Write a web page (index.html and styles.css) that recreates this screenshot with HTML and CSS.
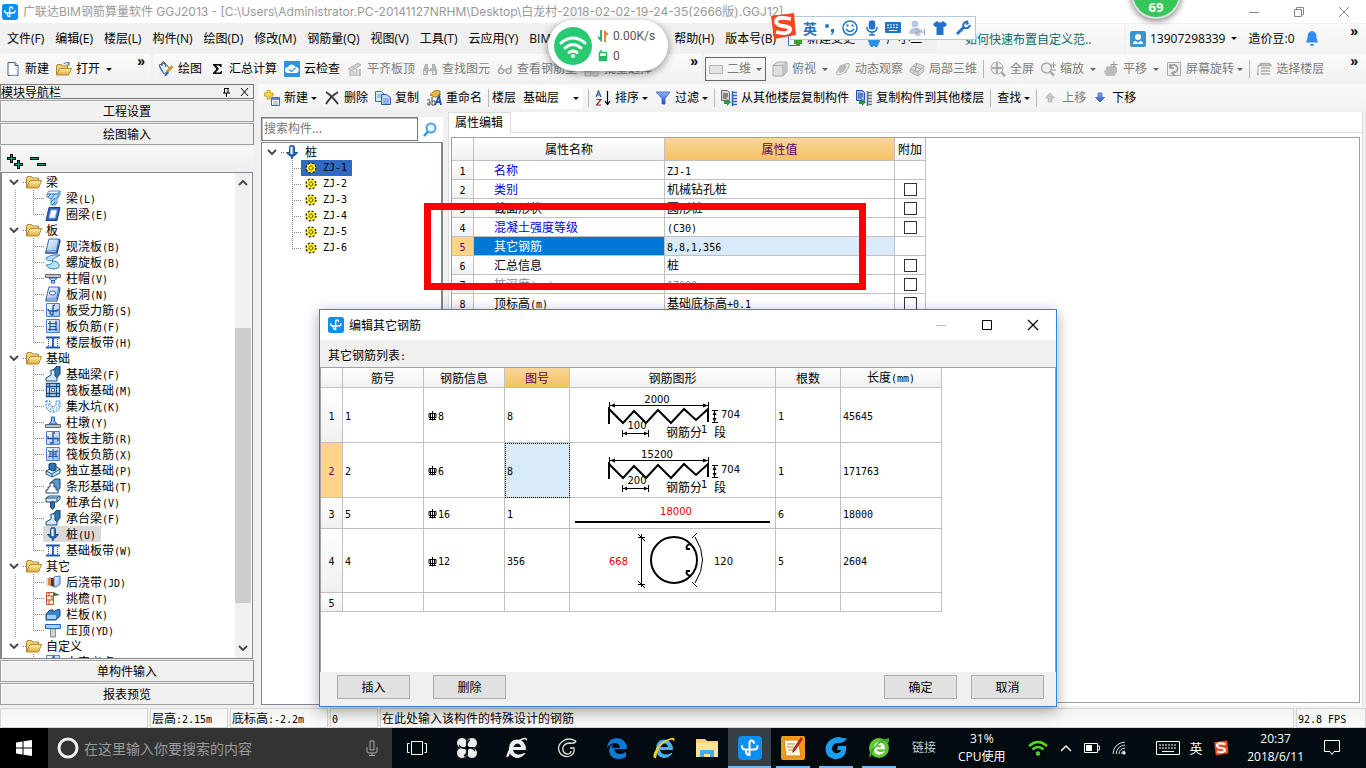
FILE: index.html
```html
<!DOCTYPE html>
<html lang="zh-CN">
<head>
<meta charset="utf-8">
<title>广联达BIM钢筋算量软件 GGJ2013</title>
<link rel="stylesheet" href="styles.css">
</head>
<body>
<svg class="sprite" aria-hidden="true">
  <defs>
    <linearGradient id="gold" x1="0" y1="0" x2="0" y2="1"><stop offset="0" stop-color="#fff0b0"/><stop offset="1" stop-color="#e3a935"/></linearGradient>
    <linearGradient id="sky" x1="0" y1="0" x2="1" y2="1"><stop offset="0" stop-color="#ffffff"/><stop offset="1" stop-color="#8fb6ee"/></linearGradient>
    <linearGradient id="arrowBlue" x1="0" y1="0" x2="0" y2="1"><stop offset="0" stop-color="#8fb4ff"/><stop offset="1" stop-color="#1a4fd0"/></linearGradient>
  </defs>
  <symbol id="app" viewBox="0 0 24 24"><rect width="24" height="24" rx="4" fill="#0b8ff0"/><path d="M16 7q-.5-2.500-2.500-2.500T11.500 7v12Q8 19 8 15M4 10q0 3.500 3.500 3.500h8.500q3.500 0 3.500-3.500" fill="none" stroke="#fff" stroke-width="2" stroke-linecap="round"/></symbol>
  <symbol id="page" viewBox="0 0 16 16"><path d="M3 1.500h7l3 3v10H3z" fill="#fff" stroke="#44607f"/><path d="M10 1.500v3h3" fill="#cfe0f4" stroke="#44607f"/><path d="M12 6v8H5" fill="none" stroke="#bcd2ec"/></symbol>
  <symbol id="folder" viewBox="0 0 16 16"><path d="M.5 14V4l1-1.500h4l1 1.500h6v3" fill="#f3cf70" stroke="#b08a3a"/><path d="M.5 14L4 6.500h11.500L12.500 14z" fill="url(#gold)" stroke="#b08a3a"/></symbol>
  <symbol id="open" viewBox="0 0 16 16"><path d="M.5 14V5l1-1.500h4l1 1.500h5v3" fill="#f3cf70" stroke="#b08a3a"/><path d="M.5 14L4 7.500h11.500L12.500 14z" fill="url(#gold)" stroke="#b08a3a"/><path d="M8 3q3-3 5 0V1m0 3h-2.500" fill="none" stroke="#4a78a8" stroke-width="1.200"/></symbol>
  <symbol id="draw" viewBox="0 0 16 16"><path d="M1 4l6-2 5 6-6 5z" fill="#e9f1fb" stroke="#3c5f9c"/><path d="M1.500 4.500L6 12l-2-1-3-5z" fill="#4b74c4"/><path d="M4 5q-1-5 2-4l2 5" fill="none" stroke="#444"/><path d="M14.500 5L9 11" stroke="#c9a12a" stroke-width="3"/><path d="M9 10l2 2-3 3H6z" fill="#2c6ad0"/></symbol>
  <symbol id="sigma" viewBox="0 0 16 16"><path d="M4 3h8.500v3h-1q-.3-1.500-2-1.500H7L10 8l-3.500 3.500H10q1.500 0 2-1.500h1l-.5 3H4v-1L7.500 8 4 4z" fill="#000"/></symbol>
  <symbol id="cloud" viewBox="0 0 16 16"><rect width="16" height="16" rx="1" fill="#2996e3"/><path d="M4 12a3 3 0 010-6 4 4 0 017.500 0A3 3 0 0112 12z" fill="#fff"/><path d="M5 8.500l2.500 2L11.500 7" fill="none" stroke="#2996e3" stroke-width="1.300"/></symbol>
  <symbol id="align" viewBox="0 0 16 16"><path d="M1 8l10-6 3 2-9 6z" fill="#ccc" stroke="#b5b5b5"/><path d="M2 10v5h12V8H9v2z" fill="#c4c4c4"/><path d="M5 10v4M8 9v5M11 8v6" stroke="#f0f0f0"/></symbol>
  <symbol id="binoc" viewBox="0 0 16 16"><path d="M3 3h3v4h4V3h3l2 6v5h-5v-4H6v4H1V9z" fill="#b5b5b5"/><path d="M3 10v3m9-3v3M7.500 6v3" stroke="#eee" stroke-width="1.500"/></symbol>
  <symbol id="glasses" viewBox="0 0 16 16"><g fill="none" stroke="#aaa" stroke-width="1.500"><circle cx="4" cy="10" r="2.500"/><circle cx="11.500" cy="10" r="2.500"/><path d="M6.500 9h2.500M2 9l3-5M14 9V4"/></g></symbol>
  <symbol id="batch" viewBox="0 0 16 16"><path d="M1 10h6v5H1zM9 11l5-4v8H9z" fill="#ddd" stroke="#aaa"/></symbol>
  <symbol id="rect2d" viewBox="0 0 16 16"><path d="M1.500 4.500h13v8h-13z" fill="#e3e3e3" stroke="#b5b5b5"/></symbol>
  <symbol id="cube" viewBox="0 0 16 16"><path d="M1 4.500L5 1h10v10l-4 4H1z" fill="#e0e0e0" stroke="#aaa"/><path d="M1 4.500h10V15M11 4.500L15 1" fill="none" stroke="#aaa"/><path d="M11.500 5L15 1.500V11l-3.500 3.500z" fill="#c4c4c4"/></symbol>
  <symbol id="orbit" viewBox="0 0 16 16"><ellipse cx="8" cy="8" rx="8" ry="3" fill="#ddd" stroke="#bbb" transform="rotate(-40 8 8)"/><circle cx="8" cy="8" r="4.500" fill="#b8b8b8"/><path d="M3 13Q10 13 13 4" stroke="#fff" fill="none"/></symbol>
  <symbol id="local3d" viewBox="0 0 16 16"><path d="M1 8l6-6 8 3-1 6-5 4-8-4z" fill="#d8d8d8" stroke="#b0b0b0"/><path d="M1 8l8 3 6-6M9 11v4M4 5l8 3M5 9.500V13M8 2L6 10" fill="none" stroke="#aaa"/></symbol>
  <symbol id="full" viewBox="0 0 16 16"><circle cx="7" cy="7" r="6" fill="#eee" stroke="#aaa"/><path d="M7 2v10M2 7h10" stroke="#999" stroke-width="1.500"/><path d="M11 11l4 4" stroke="#aaa" stroke-width="2.500"/></symbol>
  <symbol id="zoomg" viewBox="0 0 16 16"><circle cx="6.500" cy="7" r="5" fill="#eee" stroke="#aaa" stroke-width="1.500"/><path d="M10 10.500l4 4" stroke="#aaa" stroke-width="2.500"/><path d="M11 4h5M13.500 1.500v5M12 9h4" stroke="#999"/></symbol>
  <symbol id="hand" viewBox="0 0 16 16"><path d="M3 15l-2-5 2-1V6l2-1 1 1 2-2 2 1 2-1 2 3v4l-3 4z" fill="#bbb"/><path d="M11 0v7M7.500 3.500h7" stroke="#999"/></symbol>
  <symbol id="rot" viewBox="0 0 16 16"><path d="M1.500 1.500h13v13h-13z" fill="#eee" stroke="#aaa"/><path d="M4 7q1-4 5-3 4 2 2 6-1 2-4 2M4 3v4h4M9 10l-3 2 3 3" fill="none" stroke="#999" stroke-width="1.500"/></symbol>
  <symbol id="floors" viewBox="0 0 16 16"><path d="M5 2.500h8l2 2H3zM5 7h9M5 10h9M5 13h9" fill="#ddd" stroke="#aaa" stroke-width="1.500"/><path d="M2 5v9m-1-2l1 2 1-2" stroke="#aaa" fill="none"/></symbol>
  <symbol id="addnew" viewBox="0 0 16 16"><path d="M3 0h3v3h3v3H6v3H3V6H0V3h3z" fill="#ffe13b" stroke="#b98d0b" stroke-width=".8"/><path d="M7.500 7.500h8v8h-8z" fill="#fff" stroke="#3a66b5"/><path d="M8 8h7v2H8z" fill="#5b8de0"/><path d="M9 12h5M9 14h5" stroke="#6c98d8"/></symbol>
  <symbol id="del" viewBox="0 0 16 16"><path d="M2 2q6 4 12 12M14 2Q6 7 2 14" fill="none" stroke="#333" stroke-width="1.800"/></symbol>
  <symbol id="copy" viewBox="0 0 16 16"><path d="M.5 1.500h6l3 3v7h-9z" fill="#dce9fb" stroke="#416cb5"/><path d="M2 5h5M2 7h5" stroke="#6c98d8"/><path d="M6.500 4.500h5l4 3v7h-9z" fill="#c3d9f9" stroke="#2c58a8"/><path d="M8 9h6M8 11h6M8 13h6" stroke="#5b8de0"/></symbol>
  <symbol id="rename" viewBox="0 0 16 16"><path d="M4 5q4-6 10-4v6H8z" fill="#e8b83a" stroke="#8c6a1b" stroke-width=".8"/><path d="M1 10q3-1 3 1v4H2q-2-2 2-2.500M6 7v8h3v-4H6" fill="none" stroke="#555"/><path d="M9 15l4-9 2 9m-4-3h4" fill="none" stroke="#2450b8" stroke-width="1.800"/></symbol>
  <symbol id="sort" viewBox="0 0 16 16"><path d="M1 7l2.500-6L6 7M2 5h3" fill="none" stroke="#2b4fa8" stroke-width="1.200"/><path d="M1.500 9.500H6L1.500 15H6" fill="none" stroke="#9c2828" stroke-width="1.200"/><path d="M12.500 1v13M10 11l2.500 3.500L15 11" fill="none" stroke="#000" stroke-width="1.200"/></symbol>
  <symbol id="funnel" viewBox="0 0 16 16"><path d="M1 2h14L10 8.500V14H7V8.500z" fill="url(#arrowBlue)" stroke="#2a5bbd" stroke-width=".8"/></symbol>
  <symbol id="fromf" viewBox="0 0 16 16"><path d="M.5.500h6l2 2v8h-8z" fill="#d7d7d7" stroke="#666"/><path d="M2 4h5M2 6h5M2 8h4" stroke="#333"/><path d="M3 11h3v-2l4 3-4 4v-2H3z" fill="#2a9a3c"/><path d="M11 2.500h5M11 5.500h5M11 8.500h5M11 11.500h5M11 14.500h5M11.500 1v15" stroke="#2f68c8" stroke-width="1.600"/></symbol>
  <symbol id="tof" viewBox="0 0 16 16"><path d="M.5.500h6l2 2v8h-8z" fill="#9dbcf5" stroke="#2450b8"/><path d="M2 4h5M2 6h5M2 8h4" stroke="#1d46a8"/><path d="M3 11h3v-2l4 3-4 4v-2H3z" fill="#2a9a3c"/><path d="M11 2.500h5M11 5.500h5M11 8.500h5M11 11.500h5M11 14.500h5M11.500 1v15" stroke="#64748c" stroke-width="1.600"/></symbol>
  <symbol id="up" viewBox="0 0 10 16"><path d="M5 3l4.500 5H7v4H3V8H.5z" fill="#c9c9c9" stroke="#aaa" stroke-width=".6"/></symbol>
  <symbol id="down" viewBox="0 0 10 16"><path d="M5 12L9.500 7.500H7V3H3v4.500H.5z" fill="url(#arrowBlue)" stroke="#1b3f9a" stroke-width=".6"/></symbol>
  <symbol id="user" viewBox="0 0 16 16"><rect width="16" height="16" rx="2" fill="#3c96cb"/><circle cx="8" cy="6" r="3" fill="#fff"/><path d="M3 13q0-3 3-3l2 2 2-2q3 0 3 3z" fill="#fff"/></symbol>
  <symbol id="bell" viewBox="0 0 14 16"><path d="M7 0q5 1 4.500 7l1.500 4.500H1L2.500 7Q2 1 7 0z" fill="#2f8df5"/><path d="M4.500 13h5L7 15.500z" fill="#2f8df5"/></symbol>
  <symbol id="newchg" viewBox="0 0 16 16"><path d="M1.500 2.500h10v12h-10z" fill="#fff" stroke="#3b76b8"/><path d="M11 7v8M7 11h8" stroke="#3a9f2a" stroke-width="4"/></symbol>
  <symbol id="gxe" viewBox="0 0 16 16"><circle cx="8" cy="9" r="6" fill="#2b93e6"/><path d="M3 13l2 3h2l1-2 1 2h2l2-3z" fill="#2b93e6"/></symbol>
  <symbol id="chev" viewBox="0 0 10 10"><path d="M1 3l4 4 4-4" fill="none" stroke="#444" stroke-width="1.800"/></symbol>
  <symbol id="gear" viewBox="0 0 12 12"><circle cx="6" cy="6" r="4.800" fill="#ffee20" stroke="#222" stroke-width="1.600" stroke-dasharray="2 1.770"/><circle cx="6" cy="6" r="4.200" fill="#ffee20"/><circle cx="6" cy="6" r="2" fill="none" stroke="#222" stroke-dasharray="1.500 .6"/></symbol>
  <symbol id="mag" viewBox="0 0 16 16"><circle cx="9" cy="6" r="4.500" fill="#e9f5ff" stroke="#48a4e8" stroke-width="2"/><path d="M6 9.500L2 14" stroke="#3a90d8" stroke-width="2.500"/></symbol>
  <symbol id="t-beam" viewBox="0 0 16 16"><path d="M2 4l2-3h11l-2 3z" fill="#fff" stroke="#3c8fd8"/><path d="M2 4h11v3l-3 2v6H6V9L2 7zM13 4l2-3v4l-3 4v4l-2 2" fill="#b9dcf6" stroke="#3c8fd8"/><path d="M3 7l3-3m0 5l4-5m-4 8l4-4m-3 7l3-3" stroke="#2272be"/></symbol>
  <symbol id="t-ring" viewBox="0 0 16 16"><path d="M4 1.500h11l-3 13H1z" fill="#2e62b8" stroke="#173f8c"/><path d="M6 4h6l-2 8H4z" fill="#fff" stroke="#8fb6ee"/></symbol>
  <symbol id="t-slab" viewBox="0 0 16 16"><path d="M4 1h10l-2.500 12H1z" fill="url(#sky)" stroke="#3a6cc0"/><path d="M1 13v2h11l3-12-1-2M12 13v2" fill="none" stroke="#173f8c" stroke-width="1.300"/></symbol>
  <symbol id="t-spiral" viewBox="0 0 16 16"><path d="M15 1Q6 0 1 4q0 3 7 3-1 4-7 4 4 6 12 3 3-3-1-6-4-1-5-2 3-3 8-5z" fill="#b5e0f8" stroke="#2f86c8"/></symbol>
  <symbol id="t-cap" viewBox="0 0 16 16"><path d="M.5 4.500h15v3H.5z" fill="#c3c3c3" stroke="#666"/><path d="M4 8h8l-2 2.500H6zM6.500 10.500h3V13h-3z" fill="#cfe6fb" stroke="#1d57b4"/></symbol>
  <symbol id="t-hole" viewBox="0 0 16 16"><path d="M4 1h10l-2.500 12H1z" fill="url(#sky)" stroke="#3a6cc0"/><path d="M1 13v2h11l3-12-1-2" fill="none" stroke="#173f8c"/><ellipse cx="7.500" cy="7" rx="3" ry="2" fill="#fff" stroke="#2a5bbd"/></symbol>
  <symbol id="t-force" viewBox="0 0 16 16"><path d="M1.500 1.500h13v13h-13z" fill="url(#sky)" stroke="#4a7fd4"/><path d="M8 13V5q0-2 2-2M3 7q0 2 2 2h6q2 0 2-2M8 13q-3 0-3-3" fill="none" stroke="#1d4fa0" stroke-width="1.300"/></symbol>
  <symbol id="t-neg" viewBox="0 0 16 16"><path d="M1.500 1.500h13v13h-13z" fill="url(#sky)" stroke="#4a7fd4"/><path d="M3 5.500h9M3 11.500h9M5 3v10M11 3v10M5 8.500h6" fill="none" stroke="#1d4fa0" stroke-width="1.200"/></symbol>
  <symbol id="t-strip" viewBox="0 0 16 16"><path d="M1 3.500h14M1 13.500h14M8 4v9" fill="none" stroke="#1d57b4" stroke-width="1.800"/><path d="M3.500 5v8M12.500 5v8" stroke="#1d57b4" stroke-dasharray="1 1"/></symbol>
  <symbol id="t-fbeam" viewBox="0 0 16 16"><path d="M8 4l4-4h3v8l-4 5z" fill="#2f72ae" stroke="#123f72"/><path d="M1 15v-3l5-3V4h4v6l2 2v3z" fill="#d3e9fa" stroke="#174b86"/></symbol>
  <symbol id="t-raft" viewBox="0 0 16 16"><path d="M1.500 1.500h13v13h-13z" fill="#d3e9fa" stroke="#174b86" stroke-width="1.300"/><path d="M4.500 1v14M11.500 1v14M1 4.500h14M1 11.500h14" fill="none" stroke="#174b86" stroke-width="1.300"/><path d="M6.500 6.500h3v3h-3z" fill="#fff" stroke="#2f72ae"/></symbol>
  <symbol id="t-sump" viewBox="0 0 16 16"><path d="M1 3h4v4q3 3 6 0V3h4v5q-1 6-7 6T1 8z" fill="#e4f2fd" stroke="#2f74c4" stroke-dasharray="2 1"/><path d="M5 11h1m2 1h1m2-2h1M3 7h1m9 0h1M7 10h1" stroke="#2f74c4"/></symbol>
  <symbol id="t-pier" viewBox="0 0 16 16"><path d="M.5 10.500h15v3H.5z" fill="#c3c3c3" stroke="#666"/><path d="M4 10l2.500-3V3h3v4l2.500 3z" fill="#9cc6f2" stroke="#1d57b4"/></symbol>
  <symbol id="t-main" viewBox="0 0 16 16"><path d="M1.500 1.500h13v13h-13z" fill="url(#sky)" stroke="#4a7fd4"/><path d="M10 3H8v10H5M3 6v2.500h10V11" fill="none" stroke="#1d4fa0" stroke-width="1.300"/></symbol>
  <symbol id="t-rneg" viewBox="0 0 16 16"><path d="M1.500 1.500h13v13h-13z" fill="url(#sky)" stroke="#4a7fd4"/><path d="M3 5q5 2 10 0M3 11q5-2 10 0M8 3v10M5 8h6M5 5v6M11 5v6" fill="none" stroke="#1d4fa0"/></symbol>
  <symbol id="t-indep" viewBox="0 0 16 16"><path d="M1 9l9-5 5 3v4l-8 4-6-3z" fill="#d3e9fa" stroke="#174b86"/><path d="M1 9l6 3 8-5M7 12v3" fill="none" stroke="#174b86"/><path d="M4 2l4-1 3 1v6L8 9 4 7z" fill="#2f72ae" stroke="#123f72"/></symbol>
  <symbol id="t-tape" viewBox="0 0 16 16"><path d="M5 5l5-4h5v9l-4 5z" fill="#5f97c8" stroke="#123f72"/><path d="M1 15v-3h2V9h2V5h4v4h2v3h2v3z" fill="#fff" stroke="#174b86"/></symbol>
  <symbol id="t-pilecap" viewBox="0 0 16 16"><path d="M1 4l3-2h11v3l-3 3H1z" fill="#d3e9fa" stroke="#174b86"/><path d="M1 4h11v4M12 4l3-2" fill="none" stroke="#174b86"/><path d="M5.500 8h4v5l-2 2.500-2-2.500z" fill="#2f72ae" stroke="#123f72"/></symbol>
  <symbol id="t-pile" viewBox="0 0 16 16"><path d="M2.500 8.500h11l-2.500 3H9.500L8 15l-1.500-3.500H5z" fill="#3b7dc0" stroke="#17508c"/><rect x="5.500" y="1.500" width="5" height="10" rx="2" fill="#3b7dc0" stroke="#17508c"/><path d="M7.500 3v7" stroke="#fff" stroke-width="2"/></symbol>
  <symbol id="t-post" viewBox="0 0 16 16"><path d="M1 4h5v8H1z" fill="#f4dcc4"/><path d="M4 4h5v9l-5-2z" fill="#5f2f12"/><path d="M3 4l3-1v9l-3-1z" fill="#e08a50"/><path d="M9 3l6-1v8l-4 3H9z" fill="url(#sky)" stroke="#4772b8"/></symbol>
  <symbol id="t-eave" viewBox="0 0 16 16"><path d="M1.500 2.500h7v12h-7z" fill="#fff0e4" stroke="#b8552a"/><path d="M1 6h8M1 10h8M4 2v4m3 0v4m-3 0v4" stroke="#b8552a"/><path d="M8 2l7 3-6 1z" fill="#555"/></symbol>
  <symbol id="t-rail" viewBox="0 0 16 16"><path d="M1 8l4-4h3v2l6-3 1 1v6l-4 4H1z" fill="#3d86c8" stroke="#174b86"/><path d="M2 9h9v4H2z" fill="#9fd0f2"/></symbol>
  <symbol id="t-top" viewBox="0 0 16 16"><path d="M.5 2.500h15v4H.5z" fill="#a8d0fa" stroke="#1d62c0"/><path d="M5.500 7h5v8h-5z" fill="#d4d4d4" stroke="#8a8a8a"/></symbol>
  <symbol id="s-logo" viewBox="0 0 28 28"><path d="M2 4L25 1l2 22-22 4z" fill="#f4471d"/><path d="M22 7Q8 4 7 9q0 4 7 5 8 1 7 4-2 5-14 2" fill="none" stroke="#fff" stroke-width="3.800"/></symbol>
  <symbol id="e-logo" viewBox="0 0 24 24"><path d="M20.500 17q-3 5-9 5-7-1-7.500-9Q4 4 12 3.500q9 .5 9 10.500H8q1 4 5 4.500 4 0 6-1.500zM8.500 11H16q-.5-3.500-4-3.500T8.500 11z" fill-rule="evenodd"/></symbol>
  <symbol id="rebar" viewBox="0 0 9 10"><path d="M1 2.500h7v4H1zM4.500 0v9.500M2.500 2v6M6.500 2v6M1 8.500h7"/></symbol>
</svg>

<div class="window">
  <header class="titlebar">
    <svg class="i16"><use href="#app"/></svg>
    <h1>广联达BIM钢筋算量软件 GGJ2013 - [C:\Users\Administrator.PC-20141127NRHM\Desktop\白龙村-2018-02-02-19-24-35(2666版).GGJ12]</h1>
    <div class="winbtns">
      <button aria-label="最小化"><svg width="12" height="12"><path d="M1 6.500h10" stroke="#888"/></svg></button>
      <button aria-label="还原"><svg width="12" height="12"><path d="M1.500 3.500h7v7h-7zM3.500 3V1.500h7v7H9" fill="none" stroke="#888"/></svg></button>
      <button aria-label="关闭"><svg width="12" height="12"><path d="M1 1l10 10M11 1L1 11" stroke="#888"/></svg></button>
    </div>
  </header>

  <nav class="menubar">
    <div class="menus">
      <button>文件(F)</button><button>编辑(E)</button><button>楼层(L)</button><button>构件(N)</button><button>绘图(D)</button><button>修改(M)</button><button>钢筋量(Q)</button><button>视图(V)</button><button>工具(T)</button><button>云应用(Y)</button><button>BIM应用(I)</button><button>在线服务(S)</button><button class="help">帮助(H)</button><button>版本号(B)</button>
      <button class="tool"><svg class="i16"><use href="#newchg"/></svg>新建变更</button>
      <button class="tool"><svg class="i16"><use href="#gxe"/></svg>广小二</button>
    </div>
    <div class="tip"><a href="#">如何快速布置自定义范..</a></div>
    <div class="account">
      <button class="tool"><svg class="i16"><use href="#user"/></svg>13907298339<span class="caret"></span></button>
      <span>造价豆:0</span>
      <svg width="14" height="16"><use href="#bell"/></svg>
      <button class="more" aria-label="更多">»</button>
    </div>
  </nav>

  <div class="toolbar top">
    <div class="group g-file">
      <button class="tool"><svg class="i16"><use href="#page"/></svg>新建</button>
      <button class="tool"><svg class="i16"><use href="#open"/></svg>打开<span class="caret"></span></button>
      <button class="more" aria-label="更多">»</button>
    </div>
    <div class="group g-calc">
      <button class="tool"><svg class="i16"><use href="#draw"/></svg>绘图</button>
      <button class="tool"><svg class="i16"><use href="#sigma"/></svg>汇总计算</button>
      <button class="tool"><svg class="i16"><use href="#cloud"/></svg>云检查</button>
      <button class="tool off"><svg class="i16"><use href="#align"/></svg>平齐板顶</button>
      <button class="tool off"><svg class="i16"><use href="#binoc"/></svg>查找图元</button>
      <button class="tool off"><svg class="i16"><use href="#glasses"/></svg>查看钢筋量</button>
      <button class="tool off"><svg class="i16"><use href="#batch"/></svg>批量选择</button>
      <button class="more" aria-label="更多">»</button>
    </div>
    <div class="group g-view">
      <button class="tool off boxed"><svg class="i16"><use href="#rect2d"/></svg>二维<span class="caret"></span></button>
      <button class="tool off"><svg class="i16"><use href="#cube"/></svg>俯视<span class="caret"></span></button>
      <button class="tool off"><svg class="i16"><use href="#orbit"/></svg>动态观察</button>
      <button class="tool off"><svg class="i16"><use href="#local3d"/></svg>局部三维</button>
      <i class="sep"></i>
      <button class="tool off"><svg class="i16"><use href="#full"/></svg>全屏</button>
      <button class="tool off"><svg class="i16"><use href="#zoomg"/></svg>缩放<span class="caret"></span></button>
      <button class="tool off"><svg class="i16"><use href="#hand"/></svg>平移<span class="caret"></span></button>
      <button class="tool off"><svg class="i16"><use href="#rot"/></svg>屏幕旋转<span class="caret near"></span></button>
      <i class="sep"></i>
      <button class="tool off"><svg class="i16"><use href="#floors"/></svg>选择楼层</button>
      <button class="more" aria-label="更多">»</button>
    </div>
  </div>

  <div class="main">
    <aside class="nav">
      <div class="navhead"><span>模块导航栏</span>
        <button aria-label="固定"><svg width="9" height="10"><path d="M2 1.500h5M2.500 1v5M6 1v5M1 6h7M4.500 6v4" stroke="#000" fill="none"/></svg></button>
        <button aria-label="关闭"><svg width="9" height="10"><path d="M1 1l7 8M8 1L1 9" stroke="#000"/></svg></button>
      </div>
      <button class="bar">工程设置</button>
      <button class="bar">绘图输入</button>
      <div class="exp">
        <button aria-label="全部展开"><svg width="17" height="16"><path d="M4.500 0v9M0 4.500h9M11.500 6v9M7 10.500h9" stroke="#000" stroke-width="3"/><path d="M4.500 1v7M1 4.500h7M11.500 7v7M8 10.500h7" stroke="#0a9a94"/></svg></button>
        <button aria-label="全部折叠"><svg width="17" height="16"><path d="M0 4.500h9M7 10.500h9" stroke="#000" stroke-width="3"/><path d="M1 4.500h7M8 10.500h7" stroke="#0a9a94"/></svg></button>
      </div>
      <div class="treebox">
        <div class="tree">
          <div class="node"><svg class="chev"><use href="#chev"/></svg><i></i><svg class="i16"><use href="#folder"/></svg>梁</div>
          <ul>
            <li><b></b><svg class="i16"><use href="#t-beam"/></svg><span>梁<tt>(L)</tt></span></li>
            <li><b></b><svg class="i16"><use href="#t-ring"/></svg><span>圈梁<tt>(E)</tt></span></li>
          </ul>
          <div class="node"><svg class="chev"><use href="#chev"/></svg><i></i><svg class="i16"><use href="#folder"/></svg>板</div>
          <ul>
            <li><b></b><svg class="i16"><use href="#t-slab"/></svg><span>现浇板<tt>(B)</tt></span></li>
            <li><b></b><svg class="i16"><use href="#t-spiral"/></svg><span>螺旋板<tt>(B)</tt></span></li>
            <li><b></b><svg class="i16"><use href="#t-cap"/></svg><span>柱帽<tt>(V)</tt></span></li>
            <li><b></b><svg class="i16"><use href="#t-hole"/></svg><span>板洞<tt>(N)</tt></span></li>
            <li><b></b><svg class="i16"><use href="#t-force"/></svg><span>板受力筋<tt>(S)</tt></span></li>
            <li><b></b><svg class="i16"><use href="#t-neg"/></svg><span>板负筋<tt>(F)</tt></span></li>
            <li><b></b><svg class="i16"><use href="#t-strip"/></svg><span>楼层板带<tt>(H)</tt></span></li>
          </ul>
          <div class="node"><svg class="chev"><use href="#chev"/></svg><i></i><svg class="i16"><use href="#folder"/></svg>基础</div>
          <ul>
            <li><b></b><svg class="i16"><use href="#t-fbeam"/></svg><span>基础梁<tt>(F)</tt></span></li>
            <li><b></b><svg class="i16"><use href="#t-raft"/></svg><span>筏板基础<tt>(M)</tt></span></li>
            <li><b></b><svg class="i16"><use href="#t-sump"/></svg><span>集水坑<tt>(K)</tt></span></li>
            <li><b></b><svg class="i16"><use href="#t-pier"/></svg><span>柱墩<tt>(Y)</tt></span></li>
            <li><b></b><svg class="i16"><use href="#t-main"/></svg><span>筏板主筋<tt>(R)</tt></span></li>
            <li><b></b><svg class="i16"><use href="#t-rneg"/></svg><span>筏板负筋<tt>(X)</tt></span></li>
            <li><b></b><svg class="i16"><use href="#t-indep"/></svg><span>独立基础<tt>(P)</tt></span></li>
            <li><b></b><svg class="i16"><use href="#t-tape"/></svg><span>条形基础<tt>(T)</tt></span></li>
            <li><b></b><svg class="i16"><use href="#t-pilecap"/></svg><span>桩承台<tt>(V)</tt></span></li>
            <li><b></b><svg class="i16"><use href="#t-fbeam"/></svg><span>承台梁<tt>(F)</tt></span></li>
            <li><b></b><div class="cur"><svg class="i16"><use href="#t-pile"/></svg><span>桩<tt>(U)</tt></span></div></li>
            <li><b></b><svg class="i16"><use href="#t-strip"/></svg><span>基础板带<tt>(W)</tt></span></li>
          </ul>
          <div class="node"><svg class="chev"><use href="#chev"/></svg><i></i><svg class="i16"><use href="#folder"/></svg>其它</div>
          <ul>
            <li><b></b><svg class="i16"><use href="#t-post"/></svg><span>后浇带<tt>(JD)</tt></span></li>
            <li><b></b><svg class="i16"><use href="#t-eave"/></svg><span>挑檐<tt>(T)</tt></span></li>
            <li><b></b><svg class="i16"><use href="#t-rail"/></svg><span>栏板<tt>(K)</tt></span></li>
            <li><b></b><svg class="i16"><use href="#t-top"/></svg><span>压顶<tt>(YD)</tt></span></li>
          </ul>
          <div class="node"><svg class="chev"><use href="#chev"/></svg><i></i><svg class="i16"><use href="#folder"/></svg>自定义</div>
          <ul>
            <li><b></b><svg class="i16"><use href="#t-main"/></svg><span>自定义点</span></li>
          </ul>
        </div>
        <div class="scroll">
          <svg class="chev flip"><use href="#chev"/></svg>
          <div class="track"><div class="thumb"></div></div>
          <svg class="chev"><use href="#chev"/></svg>
        </div>
      </div>
      <button class="bar">单构件输入</button>
      <button class="bar">报表预览</button>
    </aside>

    <section class="work">
      <div class="toolbar">
        <div class="group g-edit">
          <button class="tool"><svg class="i16"><use href="#addnew"/></svg>新建<span class="caret near"></span></button>
          <button class="tool"><svg class="i16"><use href="#del"/></svg>删除</button>
          <button class="tool"><svg class="i16"><use href="#copy"/></svg>复制</button>
          <button class="tool"><svg class="i16"><use href="#rename"/></svg>重命名</button>
          <i class="sep"></i>
          <label class="floor">楼层 <span class="combo"><select><option>基础层</option></select><span class="caret"></span></span></label>
          <i class="sep"></i>
          <button class="tool"><svg class="i16"><use href="#sort"/></svg>排序<span class="caret near"></span></button>
          <button class="tool"><svg class="i16"><use href="#funnel"/></svg>过滤<span class="caret near"></span></button>
          <i class="sep"></i>
          <button class="tool"><svg class="i16"><use href="#fromf"/></svg>从其他楼层复制构件</button>
          <button class="tool"><svg class="i16"><use href="#tof"/></svg>复制构件到其他楼层</button>
          <i class="sep"></i>
          <button class="tool">查找<span class="caret near"></span></button>
          <i class="sep"></i>
          <button class="tool move off"><svg width="10" height="16"><use href="#up"/></svg>上移</button>
          <button class="tool move"><svg width="10" height="16"><use href="#down"/></svg>下移</button>
        </div>
      </div>
      <div class="panes">
        <div class="list">
          <div class="find"><input type="text" placeholder="搜索构件..." aria-label="搜索构件"><button aria-label="搜索"><svg class="i16"><use href="#mag"/></svg></button></div>
          <div class="parts">
            <div class="node"><svg class="chev"><use href="#chev"/></svg><i></i><svg class="i16"><use href="#t-pile"/></svg>桩</div>
            <ul>
              <li><b></b><div class="sel"><svg width="12" height="12"><use href="#gear"/></svg><tt>ZJ-1</tt></div></li>
              <li><b></b><div><svg width="12" height="12"><use href="#gear"/></svg><tt>ZJ-2</tt></div></li>
              <li><b></b><div><svg width="12" height="12"><use href="#gear"/></svg><tt>ZJ-3</tt></div></li>
              <li><b></b><div><svg width="12" height="12"><use href="#gear"/></svg><tt>ZJ-4</tt></div></li>
              <li><b></b><div><svg width="12" height="12"><use href="#gear"/></svg><tt>ZJ-5</tt></div></li>
              <li><b></b><div><svg width="12" height="12"><use href="#gear"/></svg><tt>ZJ-6</tt></div></li>
            </ul>
          </div>
        </div>
        <div class="props">
          <div class="tabs"><button>属性编辑</button></div>
          <div class="gridbox">
            <table class="grid attrs">
              <colgroup><col class="c-no"><col class="c-name"><col class="c-val"><col class="c-add"></colgroup>
              <thead><tr><th></th><th>属性名称</th><th class="hot">属性值</th><th>附加</th></tr></thead>
              <tbody>
                <tr><th><tt>1</tt></th><td class="key">名称</td><td><tt>ZJ-1</tt></td><td></td></tr>
                <tr><th><tt>2</tt></th><td class="key">类别</td><td>机械钻孔桩</td><td><input type="checkbox" aria-label="类别附加"></td></tr>
                <tr><th><tt>3</tt></th><td>截面形状</td><td>圆形桩</td><td><input type="checkbox" aria-label="截面形状附加"></td></tr>
                <tr><th><tt>4</tt></th><td class="key">混凝土强度等级</td><td><tt>(C30)</tt></td><td><input type="checkbox" aria-label="混凝土强度等级附加"></td></tr>
                <tr class="on"><th><tt>5</tt></th><td>其它钢筋</td><td><tt>8,8,1,356</tt></td><td></td></tr>
                <tr><th><tt>6</tt></th><td>汇总信息</td><td>桩</td><td><input type="checkbox" aria-label="汇总信息附加"></td></tr>
                <tr class="dim"><th><tt>7</tt></th><td>桩深度<tt>(mm)</tt></td><td><tt>17000</tt></td><td><input type="checkbox" aria-label="桩深度附加"></td></tr>
                <tr><th><tt>8</tt></th><td>顶标高<tt>(m)</tt></td><td>基础底标高<tt>+0.1</tt></td><td><input type="checkbox" aria-label="顶标高附加"></td></tr>
              </tbody>
            </table>
          </div>
        </div>
      </div>
    </section>
  </div>

  <footer class="status">
    <span class="s1"></span><span class="s2">层高<tt>:2.15m</tt></span><span class="s3">底标高<tt>:-2.2m</tt></span><span class="s4"><tt>0</tt></span><span class="s5">在此处输入该构件的特殊设计的钢筋</span><span class="s6"><tt>92.8 FPS</tt></span>
  </footer>

  <div class="taskbar">
    <button class="start" aria-label="开始"><svg width="16" height="16" fill="#fff"><path d="M0 2.500L6.500 1.500v6H0zM7.500 1.300L16 0v7.500H7.500zM0 8.500h6.500v6L0 13.500zM7.500 8.500H16V16l-8.500-1.300z"/></svg></button>
    <label class="cortana"><svg width="22" height="22"><circle cx="11" cy="11" r="9" fill="none" stroke="#eee" stroke-width="3"/></svg><input type="text" placeholder="在这里输入你要搜索的内容" aria-label="搜索"><svg width="12" height="16"><path d="M4 1h4v9H4zM1 7v4q0 2 2 2h6q2 0 2-2V7M6 13v3M3 15.500h6" fill="none" stroke="#aaa"/></svg></label>
    <button class="app wide" aria-label="任务视图"><svg width="22" height="16"><path d="M5.500 1.500h11v13h-11zM3.500 3.500h-2v9h2M18.500 3.500h2v9h-2" fill="none" stroke="#fff"/></svg></button>
    <button class="app wide" aria-label="四叶"><svg width="24" height="24"><g fill="#eee" stroke="#020c10"><circle cx="7" cy="7" r="5.500"/><circle cx="17" cy="7" r="5.500"/><circle cx="17" cy="17" r="5.500"/><circle cx="7" cy="17" r="5.500"/></g><path d="M12 12Q6 13 4 9M12 12Q11 6 15 4M12 12q6-1 8 3M12 12q1 6-3 8" fill="none" stroke="#020c10" stroke-width="1.500"/></svg></button>
    <button class="app wide" aria-label="浏览器"><svg width="24" height="24" fill="#f0f0f0"><use href="#e-logo"/><path d="M4 20Q0 23 2 18 6 6 18 2q5-1 4 3-1-3-5-1Q6 9 4 20z"/></svg></button>
    <button class="app wide" aria-label="搜狗高速"><svg width="22" height="22" fill="none" stroke="#ddd" stroke-width="1.300"><path d="M20 4Q12 0 7 4 0 9 4 16q4 5 10 3 5-2 4-8h-4M20 4q-1 3-6 2-5 0-7 4-1 6 4 7 4 0 4-3"/></svg></button>
    <button class="app wide" aria-label="Edge"><svg width="24" height="24" fill="#0b7ad8"><path d="M2 12Q3 2 12 2q10 1 10 11H9q1 5 6 5 3 0 6-2v5q-3 2-7 2-9 0-10-8 0-5 5-7-2 2-2 4h8q0-4-4-5-6 0-9 5z"/></svg></button>
    <button class="app" aria-label="IE"><svg width="24" height="24"><use href="#e-logo" fill="#49b0f0"/><path d="M4 22Q0 23 2 17 7 5 19 2q5-1 3 4 0-3-4-2Q6 8 4 22z" fill="#fbca24"/></svg></button>
    <button class="app" aria-label="资源管理器"><svg width="22" height="20"><path d="M0 1h9l2 2h11v16H0z" fill="#f7d574"/><path d="M0 5h22v14H0z" fill="#fce497"/><path d="M4 12h14v7h-4v-3H8v3H4z" fill="#3cb0ea"/></svg></button>
    <button class="app active" aria-label="广联达"><svg width="24" height="24"><use href="#app"/></svg></button>
    <button class="app run" aria-label="便签"><svg width="24" height="24"><rect width="24" height="24" rx="2" fill="#f09a1c"/><path d="M3 4h14l3 16H5z" fill="#fff6df" stroke="#d8821a"/><path d="M6 8h8M6 11h7M7 14h5" stroke="#b98a4a"/><path d="M20 1l2 2-8 12-3 2 1-4z" fill="#b4281e"/></svg></button>
    <button class="app run" aria-label="广联达G"><svg width="24" height="24"><path d="M23 2Q20 8 13 7q-5 1-5 6 1 5 6 4 3-1 3-3h-4l1-4h8q1 9-5 12-8 3-13-2Q-1 13 4 6q5-5 12-5 3 2 7 1z" fill="#1b9df0"/></svg></button>
    <button class="app run" aria-label="360浏览器"><svg width="24" height="24"><circle cx="12" cy="12" r="10" fill="#5cc832"/><use href="#e-logo" fill="#fff" x="4" y="4" width="16" height="16"/><path d="M3 22Q0 18 8 10 14 3 22 2q1 4-2 6 0-3-3-3Q8 8 3 22z" fill="#3ba81e"/></svg></button>
    <span class="links">链接</span>
    <span class="cpu">31%<br>CPU使用</span>
    <div class="tray">
      <svg width="20" height="16" fill="none" stroke="#52d81c" stroke-width="2.400"><path d="M1 6q9-8 18 0M4.500 9.500q5.500-5 11 0"/><circle cx="10" cy="13.500" r="1"/></svg>
      <svg width="12" height="8"><path d="M1 7l5-5 5 5" fill="none" stroke="#fff" stroke-width="1.300"/></svg>
      <svg width="16" height="10"><path d="M.5.500h13v9H.5zM14 3h1.500v4H14" fill="none" stroke="#fff"/><path d="M2 2h6v6H2z" fill="#fff"/></svg>
      <svg width="14" height="14" fill="none" stroke="#ddd"><path d="M1 13Q2 2 13 1M4 13Q5 5 13 4M7 13q0-5 6-6M9.500 13q0-3 3.500-3"/><path d="M11 11h2v2h-2z" fill="#fff"/></svg>
      <svg class="kbd" width="24" height="14"><path d="M.5.500h23v13H.5z" fill="none" stroke="#fff"/><path d="M3 4h18M3 7h18" stroke="#fff" stroke-dasharray="2 1"/><path d="M6 10.500h12" stroke="#fff"/></svg>
      <span class="lang">英</span>
      <svg class="i16"><use href="#s-logo"/></svg>
    </div>
    <span class="clock">20:37<br>2018/6/11</span>
    <button class="notice" aria-label="通知"><svg width="18" height="18"><path d="M1.500 1.500h15v11H11l-2 3-2-3H1.500z" fill="none" stroke="#fff"/></svg></button>
  </div>

  <div class="redbox"></div>

  <div class="dialog" role="dialog" aria-label="编辑其它钢筋">
    <div class="dtitle">
      <svg class="i16"><use href="#app"/></svg><h2>编辑其它钢筋</h2>
      <button aria-label="最小化"><svg width="12" height="12"><path d="M1 6.500h10" stroke="#bbb"/></svg></button>
      <button aria-label="最大化"><svg width="12" height="12"><path d="M1.500 1.500h9v9h-9z" fill="none" stroke="#000"/></svg></button>
      <button aria-label="关闭"><svg width="12" height="12"><path d="M1 1l10 10M11 1L1 11" stroke="#000" stroke-width="1.200"/></svg></button>
    </div>
    <p>其它钢筋列表<tt>:</tt></p>
    <div class="dbody">
      <table class="grid bars">
        <colgroup><col class="d-no"><col class="d-a"><col class="d-a"><col class="d-b"><col class="d-pic"><col class="d-b"><col class="d-len"></colgroup>
        <thead><tr><th></th><th>筋号</th><th>钢筋信息</th><th class="hot">图号</th><th>钢筋图形</th><th>根数</th><th>长度<tt>(mm)</tt></th></tr></thead>
        <tbody>
          <tr class="r-zig"><th><tt>1</tt></th><td><tt>1</tt></td><td><svg class="phi"><use href="#rebar"/></svg><tt>8</tt></td><td><tt>8</tt></td>
            <td class="pic"><svg width="205" height="54">
              <g class="thin"><path d="M39.500 14v7M138.500 14v7M40 17.500h98M52.500 42v7M78.500 42v7M53 45.500h25M142 22.500h6M142 34.500h6M144.500 23v11"/></g>
              <path class="mark" d="M40 17.500l5-2v4zM138 17.500l-5-2v4zM53 45.500l4-2v4zM78 45.500l-4-2v4zM144.500 23l-2 4h4zM144.500 34l-2-4h4z"/>
              <path class="bold" d="M39 36V21L53 35 64 23 76 35 88 22 101 35 114 21 126 32 138 21V34"/>
              <text x="87" y="15" text-anchor="middle">2000</text><text x="67" y="41" text-anchor="middle">100</text><text x="151" y="30">704</text>
              <text class="cj" x="96" y="49">钢筋分</text><text x="131" y="45">1</text><text class="cj" x="144" y="49">段</text></svg></td>
            <td><tt>1</tt></td><td><tt>45645</tt></td></tr>
          <tr class="r-zig on2"><th><tt>2</tt></th><td><tt>2</tt></td><td><svg class="phi"><use href="#rebar"/></svg><tt>6</tt></td><td class="focus"><tt>8</tt></td>
            <td class="pic"><svg width="205" height="54">
              <g class="thin"><path d="M39.500 14v7M138.500 14v7M40 17.500h98M52.500 42v7M78.500 42v7M53 45.500h25M142 22.500h6M142 34.500h6M144.500 23v11"/></g>
              <path class="mark" d="M40 17.500l5-2v4zM138 17.500l-5-2v4zM53 45.500l4-2v4zM78 45.500l-4-2v4zM144.500 23l-2 4h4zM144.500 34l-2-4h4z"/>
              <path class="bold" d="M39 36V21L53 35 64 23 76 35 88 22 101 35 114 21 126 32 138 21V34"/>
              <text x="87" y="15" text-anchor="middle">15200</text><text x="67" y="41" text-anchor="middle">200</text><text x="151" y="30">704</text>
              <text class="cj" x="96" y="49">钢筋分</text><text x="131" y="45">1</text><text class="cj" x="144" y="49">段</text></svg></td>
            <td><tt>1</tt></td><td><tt>171763</tt></td></tr>
          <tr class="r-line"><th><tt>3</tt></th><td><tt>5</tt></td><td><svg class="phi"><use href="#rebar"/></svg><tt>16</tt></td><td><tt>1</tt></td>
            <td class="pic"><svg width="205" height="30"><path class="bold" d="M5 24h195"/><text class="red" x="106" y="17" text-anchor="middle">18000</text></svg></td>
            <td><tt>6</tt></td><td><tt>18000</tt></td></tr>
          <tr class="r-ring"><th><tt>4</tt></th><td><tt>4</tt></td><td><svg class="phi"><use href="#rebar"/></svg><tt>12</tt></td><td><tt>356</tt></td>
            <td class="pic"><svg width="205" height="63"><text class="red" x="39" y="36">668</text>
              <path class="thin" d="M71.500 5v53M68 8.500h7M68 55.500h7M68 5l7 7M68 52l7 7M122 9l5-5M122 53l5 5M125 8q15 23 0 46"/>
              <circle class="bold" cx="104" cy="31" r="23"/><path class="bold" d="M121 15q-6 1-4 5h3M121 47q-6-1-4-5h3"/>
              <text x="144" y="36">120</text></svg></td>
            <td><tt>5</tt></td><td><tt>2604</tt></td></tr>
          <tr><th><tt>5</tt></th><td></td><td></td><td></td><td></td><td></td><td></td></tr>
        </tbody>
      </table>
    </div>
    <div class="dfoot"><button>插入</button><button>删除</button><button class="ok">确定</button><button>取消</button></div>
  </div>

  <div class="ball">69</div>

  <div class="net">
    <svg width="38" height="38"><circle cx="19" cy="19" r="19" fill="#27ca72"/><g fill="none" stroke="#fff" stroke-width="3" stroke-linecap="round"><path d="M7 16q12-10 24 0M11 21q8-7 16 0M15 25.500q4-3 8 0"/></g><circle cx="19" cy="29" r="2" fill="#fff"/></svg>
    <div class="netrows">
      <span><svg width="10" height="12"><path d="M3 0v10L0 7" fill="none" stroke="#27b86a" stroke-width="2"/><path d="M7 12V2l3 3" fill="none" stroke="#f08030" stroke-width="2"/></svg>0.00K/s</span>
      <span><svg width="10" height="12"><path d="M1.500 2.500h7v8h-7zM3 0v2" fill="#fff" stroke="#27b86a" stroke-width="1.500"/><path d="M1 6h8v5H1z" fill="#27b86a"/></svg>0</span>
    </div>
  </div>

  <div class="ime">
    <span>英</span>
    <svg width="12" height="16" fill="#2272c8"><circle cx="3" cy="6" r="2"/><path d="M7 9h3v3l-2 3H7l1-3H7z"/></svg>
    <svg width="16" height="16" fill="none" stroke="#2272c8" stroke-width="1.500"><circle cx="8" cy="8" r="7"/><path d="M4 9q4 5 8 0"/><path d="M5.500 4.500v2M10.500 4.500v2" stroke-width="2"/></svg>
    <svg width="14" height="16" fill="none" stroke="#2272c8" stroke-width="1.500"><rect x="4.500" y="1" width="5" height="8" rx="2.500" fill="#2272c8"/><path d="M2 7q0 5 5 5t5-5M7 12v3M4 15h6"/></svg>
    <svg width="16" height="14"><rect y="1" width="16" height="11" rx="1" fill="#2272c8"/><path d="M2 4h12M2 6.500h12" stroke="#fff" stroke-dasharray="2 1"/><path d="M4 9.500h8" stroke="#fff"/></svg>
    <svg width="18" height="16" fill="#b9c7dc"><circle cx="7" cy="4" r="3.500"/><path d="M1 14q0-6 6-6t6 6z"/><path d="M7 9h4v3H8v3h4M13 9v3h4M16.500 9v6" fill="none" stroke="#8ea4c4"/></svg>
    <svg width="16" height="16" fill="#2272c8"><path d="M5 1q3 3 6 0l4 3-2 3-1.500-.5V15h-7V6.500L3 7 1 4z"/></svg>
    <svg width="16" height="16" fill="none" stroke="#2272c8"><path d="M2 14l7-7" stroke-width="3"/><path d="M13.500 2.500l-2.500 2M15 5q-1 4-5 3-3-2-1-5 2-2 4-1.500" stroke-width="2"/></svg>
  </div>
  <svg class="sogou" width="28" height="28"><use href="#s-logo"/></svg>
</div>
</body>
</html>
```

FILE: styles.css
```css
* { box-sizing: border-box; }
body {
  margin: 0;
  background: #f0f0f0;
  color: #000;
  font: 12px/16px "Open Sans", "Noto Sans CJK SC", sans-serif;
}
button, input, select { font: inherit; color: inherit; }
button { background: none; border: 0; padding: 0; margin: 0; white-space: nowrap; }
ul { list-style: none; margin: 0; padding: 0; }
svg { flex: none; display: block; }
tt { font: 10px/12px "DejaVu Sans Mono", monospace; }
.sprite { position: absolute; width: 0; height: 0; }
.i16 { width: 16px; height: 16px; }
.chev { width: 10px; height: 10px; }

.window {
  position: relative;
  display: flex;
  flex-direction: column;
  height: 100vh;
  overflow: hidden;
}

/* title bar */
.titlebar {
  display: flex;
  align-items: center;
  gap: 5px;
  height: 23px;
  padding-left: 2px;
  background: #fff;
  flex: none;
}
.titlebar h1 { flex: 1; margin: 0; font: 400 12px/16px Inter, "Noto Sans CJK SC", sans-serif; color: #999; white-space: nowrap; }
.winbtns { display: flex; }
.winbtns button { width: 45px; display: grid; place-items: center; }

/* menus */
.menubar { display: flex; height: 31px; flex: none; align-items: center; }
.menus { display: flex; gap: 11px; padding-left: 7px; width: 937px; flex: none; overflow: hidden; align-items: center; }
.menus .help { margin-left: 5px; }
.tip, .account {
  display: flex;
  align-items: center;
  height: 30px;
  background: linear-gradient(#fafafa, #f2f2f2);
}
.tip { width: 187px; padding-left: 28px; margin-right: 2px; }
.tip a { color: #0b6a6a; text-decoration: none; white-space: nowrap; }
.account { flex: 1; gap: 10px; padding: 0 4px; }
.more { margin-left: auto; align-self: flex-start; padding-right: 4px; font: 700 14px/14px "Liberation Sans", sans-serif; }

/* toolbars */
.toolbar { display: flex; height: 28px; flex: none; }
.toolbar.top { height: 30px; gap: 2px; }
.group {
  display: flex;
  align-items: center;
  gap: 7px;
  background: linear-gradient(#fbfbfb, #f0f0f0);
  border-radius: 3px;
}
.tool { display: flex; align-items: center; gap: 4px; height: 24px; }
.off { color: #7c7c7c; }
.caret {
  width: 0;
  height: 0;
  margin: 0 1px 0 2px;
  border: 3px solid transparent;
  border-top-color: #111;
  border-bottom-width: 0;
}
.caret.near { margin: 0 0 0 -1px; }
.off .caret { border-top-color: #666; }
.sep { width: 1px; height: 18px; background: #b8b8b8; }
.g-file { width: 151px; padding: 0 2px 0 5px; }
.g-calc { width: 549px; padding: 0 0 0 5px; }
.g-view { flex: 1; gap: 6px; padding: 0 4px 0 1px; }
.boxed { border: 1px solid #666; padding: 0 2px; gap: 3px; }
.g-edit { flex: 1; padding-left: 6px; }
.g-edit .sep { margin: 0 -1px; }
.move { gap: 7px; padding-left: 2px; }
.floor { display: flex; align-items: center; gap: 5px; margin-left: -3px; }
.combo { display: flex; align-items: center; width: 61px; height: 22px; background: #fff; }
.combo .caret { margin: 0 3px; }
.combo select { flex: 1; width: 40px; appearance: none; border: 0; background: none; padding: 0 2px; }

/* navigation */
.main { flex: 1; min-height: 0; display: flex; gap: 4px; }
.nav, .list, .props, .status, .dialog, .tip { font-family: "Noto Sans CJK SC", sans-serif; }
.nav { width: 254px; flex: none; display: flex; flex-direction: column; gap: 1px; padding-bottom: 1px; }
.navhead { display: flex; align-items: center; gap: 9px; height: 15px; border: 1px solid #777; padding-right: 4px; }
.navhead span { flex: 1; }
.bar { height: 22px; flex: none; border: 1px solid #a0a0a0; border-right-color: #888; box-shadow: inset 1px 1px #fff; text-align: center; }
.exp { display: flex; gap: 6px; height: 25px; padding: 6px 0 0 6px; background: linear-gradient(#f8f8f8, #efefef); border-left: 1px solid #999; }
.treebox { flex: 1; min-height: 0; display: flex; background: #fff; border: 1px solid #828790; border-width: 1px 1px 1px 2px; margin-right: 1px; }
.tree { flex: 1; overflow: hidden; padding-top: 1px; }
.node { display: flex; align-items: center; height: 16px; padding-left: 7px; }
.node i {
  width: 3px;
  height: 1px;
  margin: 0 0 0 4px;
  background: repeating-linear-gradient(90deg, #777 0 1px, transparent 1px 2px);
}
.node .i16 { margin-right: 4px; }
.tree li, .parts li { display: flex; align-items: center; height: 16px; }
.tree li {
  padding-left: 31px;
  background: repeating-linear-gradient(#999 0 1px, transparent 1px 2px) 13px 0 / 1px 100% no-repeat;
}
.tree ul:last-child li { background: none; }
.tree span { padding-left: 5px; white-space: nowrap; }
.tree .cur { display: flex; align-items: center; background: #d9d9d9; margin-left: -2px; padding: 0 5px 0 2px; }
li b {
  width: 12px;
  height: 16px;
  flex: none;
  background:
    repeating-linear-gradient(#888 0 1px, transparent 1px 2px) 0 0 / 1px 100% no-repeat,
    repeating-linear-gradient(90deg, #888 0 1px, transparent 1px 2px) 0 8px / 100% 1px no-repeat;
}
li:last-child b { background-size: 1px 8px, 100% 1px; }
.scroll { width: 16px; display: flex; flex-direction: column; align-items: center; background: #f0f0f0; padding: 5px 0; margin-right: 1px; }
.flip { transform: scaleY(-1); }
.track { flex: 1; align-self: stretch; display: flex; flex-direction: column; }
.track::before { content: ""; flex: 140; }
.track::after { content: ""; flex: 40; }
.thumb { flex: 275; background: #cdcdcd; }

/* component list */
.work { flex: 1; min-width: 0; display: flex; flex-direction: column; }
.panes { flex: 1; min-height: 0; display: flex; gap: 5px; }
.list { width: 185px; flex: none; display: flex; flex-direction: column; padding: 5px 0 1px 3px; }
.find { display: flex; height: 25px; background: #fff; }
.find input { width: 157px; height: 24px; border: 1px solid #7a7a7a; box-shadow: inset 1px 1px #bbb; padding: 0 2px 4px; background: #fff; }
.find input::placeholder { color: #777; }
.find button { padding-left: 4px; }
.parts { flex: 1; background: #fff; border: 1px solid #828790; border-width: 1px 2px 1px 1px; padding-top: 1px; }
.parts .node { padding-left: 5px; }
.parts .node .i16 { margin-right: 5px; }
.parts li { padding-left: 30px; }
.parts li b { width: 9px; }
.parts li div { display: flex; align-items: center; gap: 6px; height: 16px; padding: 0 5px 0 4px; }
.parts .sel { background: #316ac5; }

/* attribute panel */
.props { flex: 1; min-width: 0; display: flex; flex-direction: column; background: #fff; margin-right: 3px; border-left: 1px solid #dcdcdc; border-right: 1px solid #dcdcdc; }
.tabs { height: 21px; flex: none; border-bottom: 1px solid #dcdcdc; }
.tabs button { height: 21px; padding: 0 7px 2px 6px; background: #fff; border-right: 1px solid #dcdcdc; border-top: 1px solid #dcdcdc; }
.gridbox { flex: 1; min-height: 0; margin: 4px 2px 3px; border: 1px solid #a0a0a8; overflow: hidden; }
.grid { border-collapse: separate; border-spacing: 0; table-layout: fixed; width: 0; line-height: 14px; }
.grid th, .grid td { border: 1px solid #c0c0c0; border-width: 0 1px 1px 0; padding: 0 0 0 2px; text-align: left; font-weight: 400; white-space: nowrap; overflow: hidden; }
.grid th { text-align: center; padding: 0; background: linear-gradient(#fff, #f0f0f0); }
.grid th.hot { background: linear-gradient(#fad69a, #f3c264); color: #600060; }
.attrs thead th { height: 23px; }
.attrs tbody th, .attrs tbody td { height: 19px; }
.c-no { width: 22px; }
.c-name { width: 191px; }
.c-val { width: 230px; }
.c-add { width: 31px; }
.attrs td:nth-child(2) { padding-left: 20px; }
.attrs .key { color: #0000f0; }
.attrs .on th, .bars .on2 th { background: #ffd48a; color: #600060; }
.attrs .on td:nth-child(2) { background: #0078d7; color: #fff; }
.attrs .on td:nth-child(3) { background: #d9eaf9; }
.attrs .dim td { color: #888; }
input[type="checkbox"] { appearance: none; display: block; width: 13px; height: 13px; margin: 0 0 0 7px; border: 1px solid #333; background: #fff; }

/* status */
.status { display: flex; gap: 2px; height: 22px; flex: none; padding-top: 2px; }
.status span { border: 1px solid #d4d4d4; background: linear-gradient(#f4f4f4, #fafafa); padding-left: 1px; line-height: 18px; white-space: nowrap; }
.s1 { width: 148px; }
.s2 { width: 78px; }
.s3 { width: 98px; }
.s4 { width: 48px; }
.s5 { flex: 1; }
.s6 { width: 70px; }

/* task bar */
.taskbar { display: flex; align-items: center; height: 40px; flex: none; background: #020c10; color: #fff; }
.start { width: 48px; height: 40px; padding-left: 16px; background: #000; }
.cortana { display: flex; align-items: center; width: 344px; height: 40px; padding: 0 14px 0 9px; gap: 5px; background: #333; }
.cortana input { flex: 1; min-width: 0; border: 0; padding: 0; background: none; font: 14px/20px "Noto Sans CJK SC", sans-serif; }
.cortana input::placeholder { color: #9a9a9a; opacity: 1; }
.app { width: 43px; height: 40px; display: grid; place-items: center; flex: none; border: solid transparent; border-width: 2px 0; }
.app.wide { width: 50px; }
.app.active { background: #363f43; border-top-color: #363f43; border-bottom-color: #76b9ed; }
.app.run { background: linear-gradient(#76b9ed, #76b9ed) 50% 100% / 34px 2px no-repeat border-box; }
.links { margin-left: 12px; color: #ccc; }
.cpu, .clock { text-align: center; line-height: 18px; }
.cpu { margin-left: 22px; }
.tray { display: flex; align-items: center; margin-left: 22px; gap: 12px; flex: 1; }
.kbd { margin-left: 18px; }
.lang { font-size: 13px; margin: 0 -2px; }
.notice { margin-left: 18px; width: 42px; padding-left: 1px; margin-right: 2px; height: 40px; }

/* highlight frame around the edited attribute */
.redbox { position: absolute; left: 424px; top: 203px; width: 442px; height: 87px; border: 7px solid #f00; }

/* dialog */
.dialog {
  position: absolute;
  left: 319px;
  top: 309px;
  width: 738px;
  border: 1px solid #2f86e0;
  background: #f0f0f0;
  box-shadow: 0 4px 14px rgba(0, 0, 0, .35);
}
.dtitle { display: flex; align-items: center; height: 30px; background: #fff; padding-left: 8px; }
.dtitle h2 { flex: 1; margin: 0 0 0 5px; font-size: 12px; font-weight: 400; }
.dtitle button { width: 46px; display: grid; place-items: center; }
.dialog p { margin: 0; padding: 7px 0 0 8px; height: 27px; }
.dbody { height: 305px; background: #fff; border: 1px solid #a0a0a8; border-bottom: 0; }
.bars thead th { height: 20px; }
.bars tbody td, .bars tbody th { height: 19px; }
.d-no { width: 22px; }
.d-a { width: 81px; }
.d-b { width: 65px; }
.d-pic { width: 206px; }
.d-len { width: 101px; }
.bars .r-zig td, .bars .r-zig th { height: 55px; }
.bars .r-line td, .bars .r-line th { height: 31px; }
.bars .r-ring td, .bars .r-ring th { height: 64px; }
.bars td.pic { padding: 0; }
.bars td.focus { background: #d9eaf9; outline: 1px dotted #000; outline-offset: -1px; }
.phi { display: inline-block; width: 9px; height: 10px; margin: 0 1px 0 2px; vertical-align: middle; fill: none; stroke: #000; stroke-width: 1; }
.pic text { font: 10px "DejaVu Sans", sans-serif; fill: #000; }
.pic text.cj { font: 12px "Noto Sans CJK SC", sans-serif; }
.pic text.red { fill: #f00000; }
.thin { fill: none; stroke: #000; }
.bold { fill: none; stroke: #000; stroke-width: 2; }
.mark { fill: #000; }
.dfoot { display: flex; gap: 23px; height: 34px; padding: 3px 12px 0 17px; }
.dfoot button { width: 73px; height: 24px; border: 1px solid #adadad; background: #e1e1e1; }
.dfoot .ok { margin-left: auto; margin-right: -9px; }

/* floating widgets */
.ball {
  position: absolute;
  left: 1131px;
  top: -31px;
  width: 50px;
  height: 50px;
  padding-top: 28px;
  border: 2px solid #e0e0e0;
  border-radius: 50%;
  background: #35c759;
  box-shadow: 0 2px 6px rgba(0, 0, 0, .5);
  color: #fff;
  font: 700 13px/16px "Open Sans", sans-serif;
  text-align: center;
}
.net {
  position: absolute;
  left: 548px;
  top: 20px;
  display: flex;
  align-items: center;
  gap: 6px;
  width: 120px;
  height: 51px;
  padding-left: 6px;
  border-radius: 26px;
  background: #fff;
  box-shadow: 0 2px 8px rgba(0, 0, 0, .45);
  color: #555;
  font-family: Roboto, sans-serif;
}
.netrows { display: grid; gap: 4px; }
.netrows span { display: flex; align-items: center; gap: 5px; }
.ime {
  position: absolute;
  left: 790px;
  top: 16px;
  display: flex;
  align-items: center;
  justify-content: space-between;
  width: 186px;
  height: 24px;
  padding: 0 4px 0 12px;
  border: 1px solid #b4c8de;
  background: #fff;
  color: #2272c8;
}
.ime span { font: 700 14px/16px "Noto Sans CJK SC", sans-serif; }
.sogou { position: absolute; left: 769px; top: 12px; }
```
